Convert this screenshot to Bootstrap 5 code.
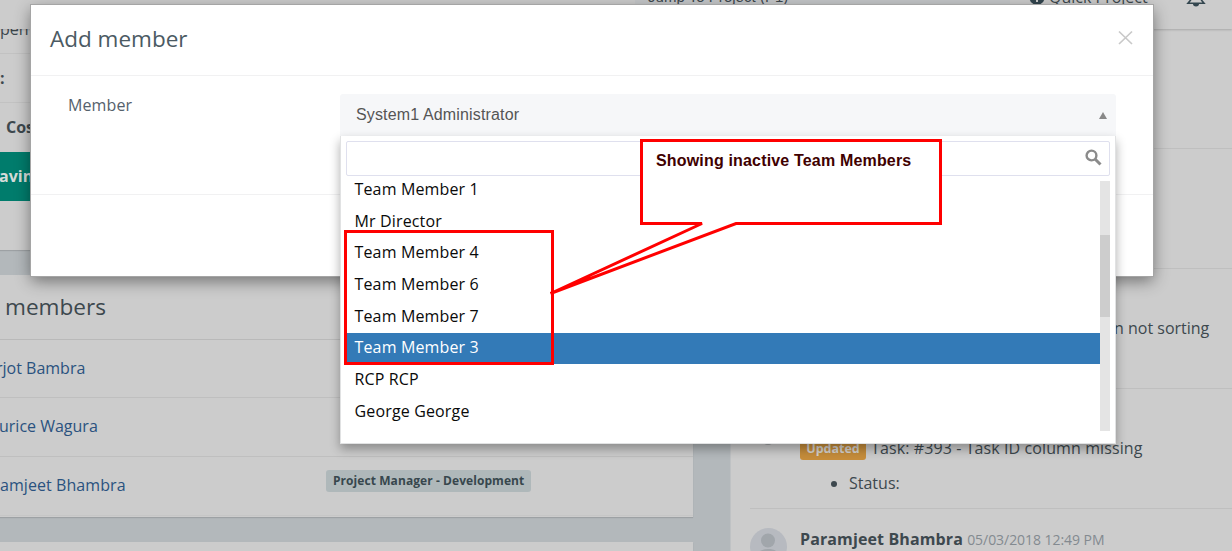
<!DOCTYPE html>
<html lang="en">
<head>
<meta charset="utf-8">
<meta name="viewport" content="width=device-width, initial-scale=1">
<title>Add member</title>
<link href="https://cdn.jsdelivr.net/npm/bootstrap@5.3.0/dist/css/bootstrap.min.css" rel="stylesheet">
<style>
body{font-family:"Open Sans","Noto Sans",sans-serif;font-size:16px;line-height:24px;color:#3d484e;background:#b3b8bb;height:551px;overflow:hidden}
.stage{width:1232px;height:551px;background:#b3b8bb}
.topbar{height:29px;background:#ccc;box-shadow:0 1px 2px rgba(0,0,0,.18);z-index:1}
.jump{margin-left:635px;width:375px;height:6px;background:#c5c7c9;font:15px/20px "Liberation Sans",sans-serif;padding-left:13px}
.jump span{margin-top:-13px;letter-spacing:.03px}
.quick{margin-left:19px;margin-top:-35px;line-height:24px}
.left-col{width:693px}
.right-col{margin-left:37px;background:#ccc;border-left:1px solid #bfc2c4;padding-left:19px}
.pane{background:#ccc;box-shadow:0 1px 1px rgba(0,0,0,.12)}
.cost-pane{height:221px;margin-bottom:25px}
.cost-row{height:49px;border-bottom:1px solid #c2c2c2;line-height:48px}
.cost-row.first{height:25px;line-height:1px}
.saving{background:#007c6c;color:#d5dbd9;border:0;line-height:48px}
.members-pane{height:242px;margin-bottom:25px}
.members-title{height:65px;font-size:22.6px;line-height:64px;padding-left:5px;border-bottom:1px solid #b9b9b9}
.member-row{height:59px;border-bottom:1px solid #bfbfbf;color:#2a527f;padding-bottom:4px}
.member-row:first-of-type{margin-top:0}
.member-row:last-child{border-color:#c6c6c6}
.role{font-size:12px;line-height:22px;height:22px;background:#afb8ba;color:#37474d;border-radius:3px;padding:0 7px;margin-top:-9px;width:205px;white-space:nowrap;letter-spacing:.07px}
.feed{height:120px;border-bottom:1px solid #bfbfbf}
.upd{font-size:12.5px;line-height:25px;background:#c68d3b;color:#d6d3ce;border-radius:3px;width:66px;height:24px;text-align:center}
.tick{width:10px;height:6px;border-radius:50%;background:#9fa3a5}
.add-dialog{left:31px;top:5px;width:1122px;height:271px;background:#fff;box-shadow:0 0 0 1px #a5a5a5,0 5px 15px rgba(0,0,0,.45);z-index:2}
.dialog-head{height:71px;border-bottom:1px solid #f1f1f2;padding:0 20px 0 19px;color:#4b5a63}
.dialog-head h4{font-size:22.5px;line-height:68px;font-weight:400}
.dialog-main{height:119px;border-bottom:1px solid #f1f1f2;padding:18px 38px 0 37px}
.field-label{width:272px;line-height:22px;color:#55616c;letter-spacing:.1px}
.picker{width:776px;height:42px;background:#f6f7f9;border-radius:3px 3px 0 0;padding:0 9px 0 16px;font:16px/40px "Liberation Sans",sans-serif;color:#555;letter-spacing:.15px}
.drop{left:340px;top:136px;width:776px;height:308px;background:#fff;border:1px solid #e1e2e3;border-top:0;box-shadow:0 5px 10px rgba(0,0,0,.32);padding:5px 5px 0 5px;color:#0a0a0a;z-index:3}
.find{height:35px;border:1px solid #dfe0ee;border-radius:2px}
.names{height:250px;margin-top:5px;padding-left:1px;letter-spacing:.15px}
.names ul{margin-top:-7px}
.names li{height:31.7px;line-height:31.7px;padding-left:7.5px}
.names li:nth-child(2){line-height:30.5px}
.names li.on{background:#337ab7;color:#fff;height:31px;margin-top:.6px;line-height:29.5px}
.rail{width:10px;background:#e4e4e4;padding-top:54px}
.thumb{height:82px;background:#cdcdcd}
.notes{z-index:4}
.callout-text{left:656px;top:151px;font:bold 16px/20px "Liberation Sans",sans-serif;color:#400000;white-space:nowrap;letter-spacing:.17px;z-index:5}
</style>
</head>
<body>
<div class="stage position-relative overflow-hidden">
  <header class="topbar d-flex position-relative">
    <div class="jump flex-shrink-0"><span class="d-block">Jump To Project (P1)</span></div>
    <div class="quick d-flex align-items-center gap-1">
      <svg width="16" height="16" viewBox="0 0 16 16"><circle cx="8" cy="8.500" r="7.500" fill="#33464f"/><path d="M8 4v9M4 8.500h8" stroke="#ccc" stroke-width="2"/></svg>
      <span>Quick Project</span>
    </div>
    <svg class="position-absolute" style="left:1186px;top:-12px" width="20" height="20" viewBox="0 0 20 20" fill="none" stroke="#33464f" stroke-width="1.6"><path d="M2 15.200h16l-2.500-3V6a5.500 5.500 0 0 0-11 0v6.200z"/><path d="M7 16h6a3 2.400 0 0 1-6 0z" fill="#33464f" stroke="none"/></svg>
  </header>

  <div class="d-flex">
    <main class="left-col flex-shrink-0">
      <section class="pane cost-pane overflow-hidden">
        <div class="cost-row first">pen</div>
        <div class="cost-row fw-bold">:</div>
        <div class="cost-row fw-bold" style="border-color:#ccc;padding-left:6px">Cos</div>
        <div class="cost-row saving fw-bold"><span style="margin-left:-1px">avin</span></div>
      </section>
      <section class="pane members-pane">
        <div class="members-title">members</div>
        <div class="member-row d-flex align-items-center" style="height:58px;padding-bottom:2px"><span style="margin-left:-4px">rjot Bambra</span></div>
        <div class="member-row d-flex align-items-center position-relative" style="padding-bottom:2px"><span style="margin-left:-1px">urice Wagura</span>
          <i class="tick position-absolute" style="left:590px;top:40px"></i><i class="tick position-absolute" style="left:636px;top:40px"></i>
        </div>
        <div class="member-row d-flex align-items-center" style="padding-bottom:2px"><span style="letter-spacing:.07px">amjeet Bhambra</span><span class="role fw-bold ms-auto" style="margin-right:162px">Project Manager - Development</span></div>
      </section>
      <section class="pane" style="height:20px"></section>
    </main>

    <aside class="right-col flex-grow-1">
      <div class="feed"></div>
      <div class="feed"></div>
      <div class="feed" style="padding:47px 0 0 364px">n not sorting</div>
      <div class="feed position-relative" style="padding:47px 0 0 50px">
        <i class="tick position-absolute" style="left:13px;top:50px"></i>
        <div class="d-flex"><span class="upd fw-bold">Updated</span><span style="margin-left:5px;letter-spacing:.1px">Task: #393 - Task ID column missing</span></div>
        <ul class="m-0" style="padding:11px 0 0 49px"><li>Status:</li></ul>
      </div>
      <div class="d-flex" style="padding-top:19px">
        <svg class="flex-shrink-0" width="37" height="37" viewBox="0 0 37 37"><circle cx="18.500" cy="18.500" r="18.500" fill="#b7bac0"/><circle cx="18" cy="12.500" r="7" fill="#a1a6ab"/><path d="M6 31c0-7 5-10 12-10s12 3 12 10z" fill="#a1a6ab"/></svg>
        <div style="margin-left:13px;margin-top:-1px"><b style="letter-spacing:.12px">Paramjeet Bhambra</b> <span style="font-size:14px;letter-spacing:-.05px;color:#838a90">05/03/2018 12:49 PM</span></div>
      </div>
    </aside>
  </div>

  <div class="add-dialog position-absolute">
    <div class="dialog-head d-flex justify-content-between">
      <h4 class="m-0">Add member</h4>
      <svg style="margin-top:25px" width="15" height="15" viewBox="0 0 15 15" stroke="#c9c9c9" stroke-width="1.700"><path d="M1 1.500l13 12.500M14 1.500L1 14"/></svg>
    </div>
    <div class="dialog-main d-flex">
      <label class="field-label flex-shrink-0">Member</label>
      <div class="picker flex-shrink-0 d-flex align-items-center justify-content-between"><span>System1 Administrator</span>
        <svg width="8" height="7" viewBox="0 0 8 7"><path d="M4 0l4 7H0z" fill="#888"/></svg>
      </div>
    </div>
  </div>

  <div class="drop position-absolute">
    <div class="find d-flex justify-content-end"><svg style="margin:7px 7px 0 0" width="17" height="17" viewBox="0 0 17 17" fill="none" stroke="#8b8b8b"><circle cx="6.500" cy="6.500" r="4.900" stroke-width="2.400"/><path d="M10 10l5.500 5.500" stroke-width="3"/></svg></div>
    <div class="names d-flex">
      <ul class="list-unstyled mb-0 flex-grow-1">
        <li>Team Member 1</li><li>Mr Director</li><li>Team Member 4</li><li>Team Member 6</li><li>Team Member 7</li>
        <li class="on">Team Member 3</li><li>RCP RCP</li><li>George George</li>
      </ul>
      <div class="rail"><div class="thumb"></div></div>
    </div>
  </div>

  <svg class="notes position-absolute top-0 start-0" width="1232" height="551" fill="none" stroke="#f00" stroke-width="3">
    <rect x="345.500" y="231.500" width="207" height="132"/>
    <path d="M702 223.500L550.500 293.500L736 223.500H940.500V140.500H641.500V223.500z" fill="#fff"/>
  </svg>
  <div class="callout-text position-absolute">Showing inactive Team Members</div>
</div>
<script src="https://cdn.jsdelivr.net/npm/bootstrap@5.3.0/dist/js/bootstrap.bundle.min.js"></script>
</body>
</html>
